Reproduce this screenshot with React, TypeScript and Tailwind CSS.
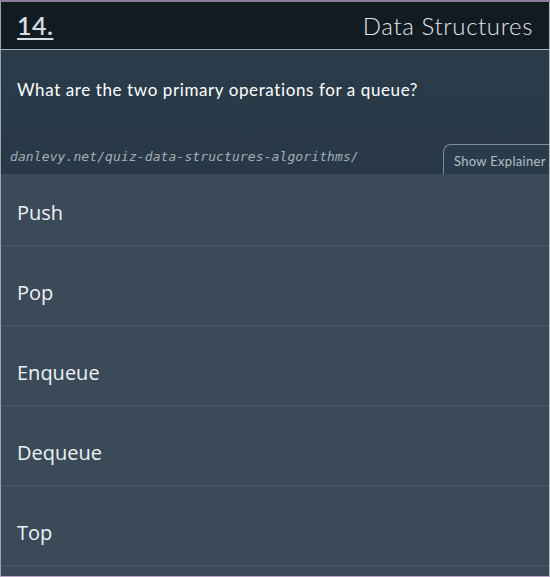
import React from 'react';

const options = ['Push', 'Pop', 'Enqueue', 'Dequeue', 'Top'];

export default function App() {
  return (
    <div className="w-[550px] h-[577px] flex flex-col overflow-hidden border-t-2 border-b border-t-[#8c7d98] border-b-[#b8a6c4] bg-[#3a4a58]">
      <div className="flex flex-col flex-1 border-l border-r border-l-[#9aa4ae] border-r-[#b4bcc4]">
        <header className="h-[48px] flex items-center justify-between pl-4 pr-4 bg-[#131b22] border-b border-[#a7b1ba]">
          <span
            className="text-[25px] font-semibold text-[#d6dde3] tracking-[0.5px] underline underline-offset-[3px] decoration-2"
            style={{ fontFamily: 'Lato, "Open Sans", sans-serif' }}
          >
            14.
          </span>
          <h1
            className="text-[24px] font-light text-[#e1e6ea] tracking-[0.6px]"
            style={{ fontFamily: 'Lato, "Open Sans", sans-serif' }}
          >
            Data Structures
          </h1>
        </header>

        <section className="h-[124px] flex flex-col bg-gradient-to-b from-[#2a3c4a] to-[#283846]">
          <p
            className="pl-4 pt-[27px] text-[17px] text-white tracking-[0.6px]"
            style={{ fontFamily: 'Lato, "Open Sans", sans-serif' }}
          >
            What are the two primary operations for a queue?
          </p>
          <div className="mt-auto flex items-end justify-between">
            <span
              className="pl-[9px] pb-[8px] text-[13px] italic text-[#a3afb9] tracking-[0.1px]"
              style={{ fontFamily: '"DejaVu Sans Mono", monospace' }}
            >
              danlevy.net/quiz-data-structures-algorithms/
            </span>
            <button
              className="h-[30px] w-[106px] pl-[10px] pt-[4px] text-left rounded-tl-[8px] border-l border-t border-[#7d8d9b] text-[13px] text-[#b3bfc8] tracking-[0.3px] bg-[#2a3b49]"
              style={{ fontFamily: 'Lato, "Open Sans", sans-serif' }}
            >
              Show Explainer
            </button>
          </div>
        </section>

        <ul className="flex flex-col">
          {options.map((opt, i) => (
            <li
              key={opt}
              className={`flex items-center pl-4 border-b border-[#4a5a68] bg-[#3a4a58] text-[20px] text-[#eef2f5] ${
                i === 0 ? 'h-[72px] pt-[6px]' : 'h-[80px] pt-[14px]'
              }`}
              style={{ fontFamily: '"Open Sans", "Noto Sans", sans-serif' }}
            >
              {opt}
            </li>
          ))}
        </ul>
      </div>
    </div>
  );
}
